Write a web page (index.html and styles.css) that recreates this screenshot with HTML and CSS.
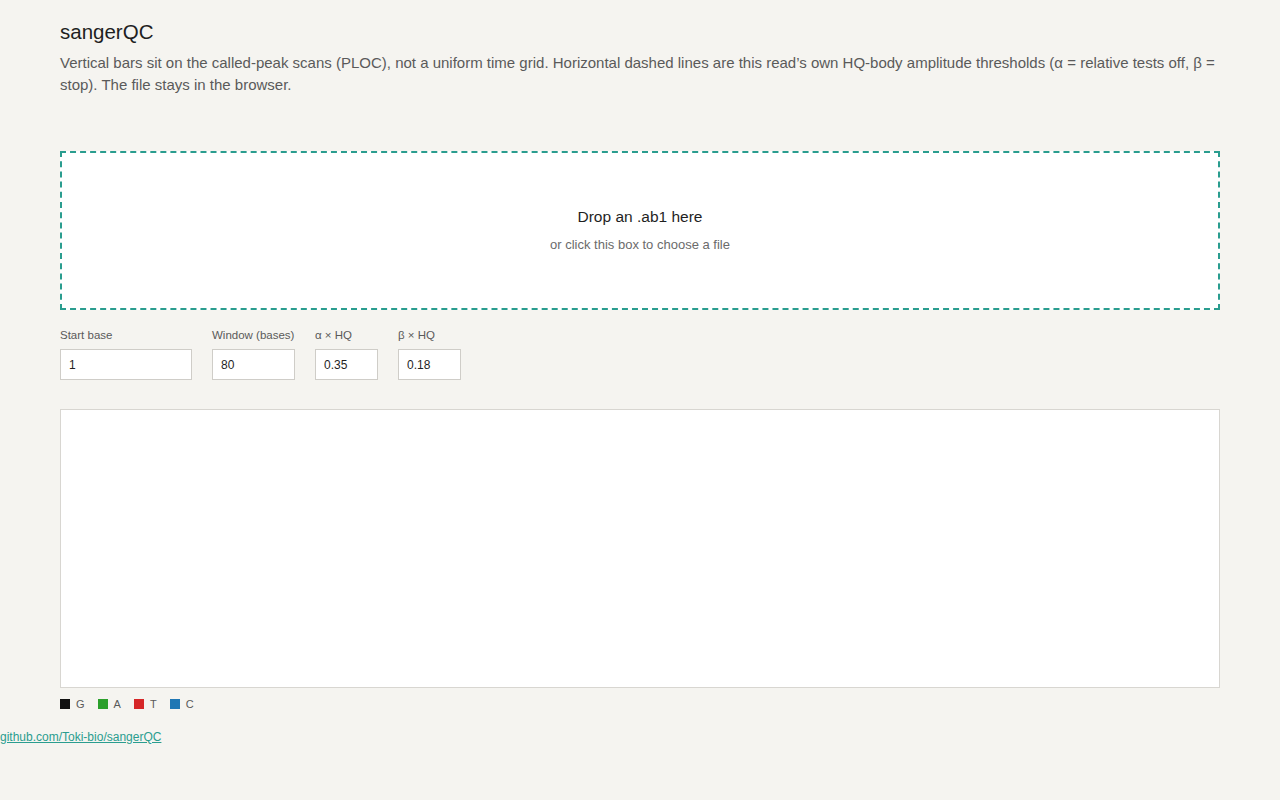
FILE: index.html
```html
<!DOCTYPE html>
<html lang="en">
<head>
    <meta charset="UTF-8">
    <meta name="viewport" content="width=device-width, initial-scale=1.0">
    <title>sangerQC</title>
    <link rel="stylesheet" href="styles.css">
</head>
<body>

    <main class="app">
        <h1>sangerQC</h1>
        <p class="intro">Vertical bars sit on the called-peak scans (PLOC), not a uniform time grid. Horizontal dashed lines are this read’s own HQ-body amplitude thresholds (α = relative tests off, β = stop). The file stays in the browser.</p>

        <label class="drop-zone" for="file-input">
            <span class="drop-title">Drop an .ab1 here</span>
            <span class="drop-sub">or click this box to choose a file</span>
            <input type="file" id="file-input" accept=".ab1">
        </label>

        <div class="controls">
            <div class="field">
                <label for="start-base">Start base</label>
                <input type="text" id="start-base" class="w-start" value="1">
            </div>
            <div class="field">
                <label for="window-size">Window (bases)</label>
                <input type="text" id="window-size" class="w-window" value="80">
            </div>
            <div class="field">
                <label for="alpha">α × HQ</label>
                <input type="text" id="alpha" class="w-small" value="0.35">
            </div>
            <div class="field">
                <label for="beta">β × HQ</label>
                <input type="text" id="beta" class="w-small" value="0.18">
            </div>
        </div>

        <div class="chart"></div>

        <div class="legend">
            <span class="key"><i class="swatch g"></i>G</span>
            <span class="key"><i class="swatch a"></i>A</span>
            <span class="key"><i class="swatch t"></i>T</span>
            <span class="key"><i class="swatch c"></i>C</span>
        </div>
    </main>

    <footer class="foot">
        <a href="#">github.com/Toki-bio/sangerQC</a>
    </footer>

</body>
</html>
```

FILE: styles.css
```css
body {
    font-family: 'Liberation Sans', Arial, sans-serif;
    background: #f5f4f0;
    color: #1f1f1f;
    margin: 0;
    padding: 0;
}

.app {
    max-width: 1160px;
    margin: 0 auto;
    padding-top: 19px;
}

.app h1 {
    font-size: 20.5px;
    font-weight: normal;
    margin: 0 0 7px;
    line-height: 26px;
}

.intro {
    font-size: 15px;
    line-height: 22px;
    color: #5a5a5a;
    margin: 0 0 55px;
}


/* file drop target */
.drop-zone {
    display: flex;
    flex-direction: column;
    align-items: center;
    justify-content: center;
    height: 155px;
    background: #fff;
    border: 2px dashed #2a9d8f;
    cursor: pointer;
}

.drop-zone input {
    display: none;
}

.drop-title {
    font-size: 15.5px;
    color: #1f1f1f;
    margin-bottom: 11px;
    margin-top: -1px;
}

.drop-sub {
    font-size: 13px;
    color: #6b6b6b;
}


.controls {
    display: flex;
    gap: 20px;
    margin-top: 19px;
}

.field {
    display: flex;
    flex-direction: column;
}

.field label {
    font-size: 11.5px;
    color: #5a5a5a;
    margin-bottom: 8px;
}

.field input {
    height: 31px;
    box-sizing: border-box;
    border: 1px solid #cfcdc8;
    background: #fff;
    padding: 0 8px;
    font-family: inherit;
    font-size: 12px;
    color: #1f1f1f;
}

.w-start { width: 132px; }
.w-window { width: 83px; }
.w-small { width: 63px; }


.chart {
    height: 279px;
    margin-top: 29px;
    background: #fff;
    border: 1px solid #d8d6d1;
    box-sizing: border-box;
}


.legend {
    display: flex;
    gap: 13px;
    margin-top: 10px;
    font-size: 11px;
    color: #5a5a5a;
}

.key {
    display: flex;
    align-items: center;
    gap: 6px;
}

.swatch {
    width: 10px;
    height: 10px;
    display: inline-block;
}

.swatch.g { background: #111; }
.swatch.a { background: #2ca02c; }
.swatch.t { background: #d62728; }
.swatch.c { background: #1f77b4; }


.foot {
    margin-top: 20px;
    font-size: 12px;
}

.foot a {
    color: #2a9d8f;
}
```
